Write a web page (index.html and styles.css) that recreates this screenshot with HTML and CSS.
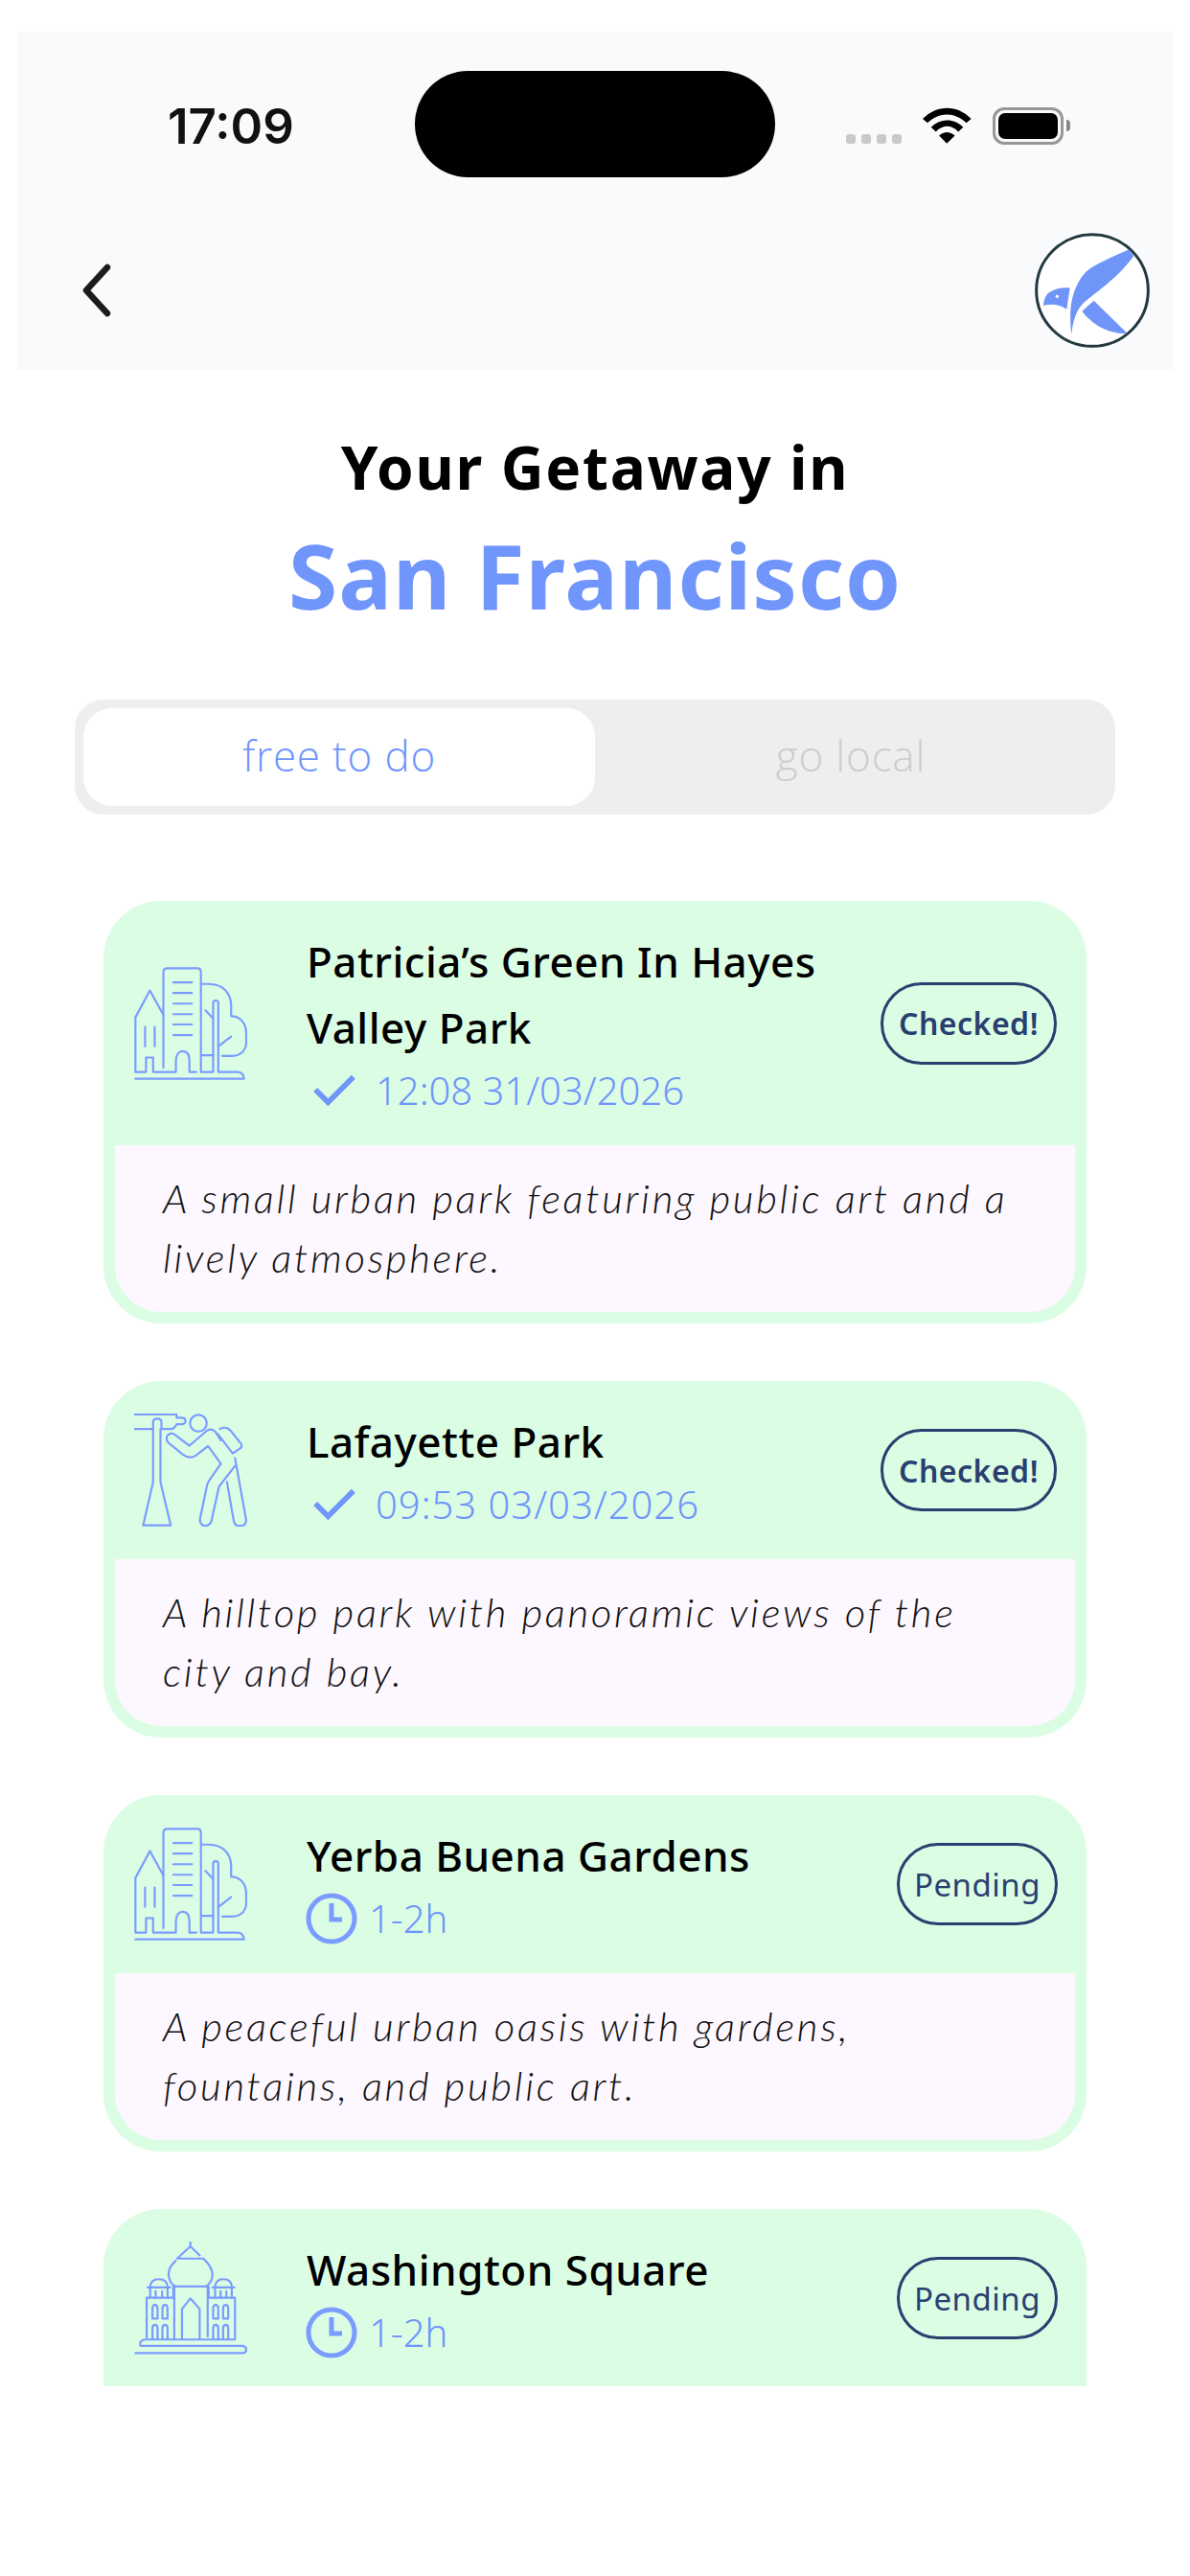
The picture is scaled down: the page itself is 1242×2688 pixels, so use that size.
FILE: index.html
```html
<!DOCTYPE html>
<html lang="en">
<head>
    <meta charset="UTF-8">
    <meta name="viewport" content="width=device-width, initial-scale=1.0">
    <title>Your Getaway</title>
    <link rel="stylesheet" href="styles.css">
</head>
<body>

    <!-- Top bar -->
    <header class="top-bar">
        <div class="status-bar">
            <span class="clock">17:09</span>
            <div class="island"></div>
            <div class="status-icons">
                <div class="signal"><i></i><i></i><i></i><i></i></div>
                <svg class="wifi" viewBox="340 65 152 112">
                    <path d="M340 100C385 55 447 55 491 100L476 113C440 78 391 78 355 113Z"/>
                    <path d="M366 126C396 97 436 97 466 126L451 140C428 118 404 118 381 140Z"/>
                    <path d="M391 152C406 138 425 138 440 152L415 177Z"/>
                </svg>
                <div class="battery"><span></span></div>
                <div class="battery-nub"></div>
            </div>
        </div>
        <div class="nav-bar">
            <svg class="back" viewBox="0 0 32 56">
                <path d="M27 4L5 28L27 52"/>
            </svg>
            <svg class="logo" viewBox="690 458 360 360">
                <circle cx="870" cy="638" r="175" class="logo-ring"/>
                <path class="logo-bird" d="M985 510C930 535 880 555 850 580C825 605 805 650 802 700C800 730 803 760 805 775C810 730 820 700 845 675C880 645 950 600 1000 530Z"/>
                <path class="logo-bird" d="M800 630C770 628 740 635 725 655C718 668 717 680 717 686C745 678 770 685 790 697Z"/>
                <path class="logo-bird" d="M875 670L838 703C870 745 920 775 980 773Z"/>
                <circle cx="760" cy="657" r="5" fill="#fff"/>
            </svg>
        </div>
    </header>

    <main>
        <div class="heading">
            <h2>Your Getaway in</h2>
            <h1>San Francisco</h1>
        </div>

        <div class="tabs">
            <div class="tab active">free to do</div>
            <div class="tab">go local</div>
        </div>

        <div class="card-list">

            <div class="card">
                <div class="card-head tall">
                    <svg class="place-icon" viewBox="118 243 352 352">
                        <path d="M122 591H460C460 580 452 570 442 570H380V355Q380 348 372 348Q364 348 364 355V570H326V260Q326 247 315 247H222Q209 247 209 260V556"/>
                        <path d="M122 570V400L167 316L209 392M152 430V490M182 430V490M122 570H155V525H177V570H248V535C248 515 258 505 269 505C282 505 290 515 290 535V570H312"/>
                        <path d="M240 291H298M240 324H298M240 357H298M240 390H298M240 422H298M240 455H298M326 518H364"/>
                        <path d="M326 296H350C395 296 420 325 420 365V396C450 396 467 420 467 450V480C467 505 445 520 425 520H392M340 378L364 403M380 490L420 460"/>
                    </svg>
                    <div class="card-text">
                        <div class="card-title">Patricia’s Green In Hayes Valley Park</div>
                        <div class="card-meta">
                            <svg class="check" viewBox="0 0 48 36"><path d="M3 17L17 31L45 3"/></svg>
                            <span>12:08 31/03/2026</span>
                        </div>
                    </div>
                    <div class="badge checked">Checked!</div>
                </div>
                <div class="card-desc">A small urban park featuring public art and a lively atmosphere.</div>
            </div>

            <div class="card">
                <div class="card-head">
                    <svg class="place-icon" viewBox="118 112 352 352">
                        <path d="M120 115H250V125H265Q278 125 278 135Q278 145 265 145H250Q245 160 230 160H203V140Q203 128 190 128Q177 128 177 140V325L146 460H232L200 325V160M177 160H120Z"/>
                        <circle cx="318" cy="142" r="26"/>
                        <path d="M345 165L290 212L245 178Q232 168 222 180Q215 192 225 203L270 240Q290 255 310 243L348 213L388 268L352 320Q345 330 343 345L323 440Q322 460 340 462Q358 460 360 440L382 340L432 275M345 165Q365 155 375 175L388 195"/>
                        <path d="M385 160Q405 150 418 165L450 205Q458 215 445 223L425 236L378 175M432 250L467 445Q465 462 447 462Q430 462 428 445L407 325"/>
                    </svg>
                    <div class="card-text">
                        <div class="card-title">Lafayette Park</div>
                        <div class="card-meta spaced">
                            <svg class="check" viewBox="0 0 48 36"><path d="M3 17L17 31L45 3"/></svg>
                            <span>09:53 03/03/2026</span>
                        </div>
                    </div>
                    <div class="badge checked">Checked!</div>
                </div>
                <div class="card-desc">A hilltop park with panoramic views of the city and bay.</div>
            </div>

            <div class="card">
                <div class="card-head">
                    <svg class="place-icon" viewBox="118 243 352 352">
                        <path d="M122 591H460C460 580 452 570 442 570H380V355Q380 348 372 348Q364 348 364 355V570H326V260Q326 247 315 247H222Q209 247 209 260V556"/>
                        <path d="M122 570V400L167 316L209 392M152 430V490M182 430V490M122 570H155V525H177V570H248V535C248 515 258 505 269 505C282 505 290 515 290 535V570H312"/>
                        <path d="M240 291H298M240 324H298M240 357H298M240 390H298M240 422H298M240 455H298M326 518H364"/>
                        <path d="M326 296H350C395 296 420 325 420 365V396C450 396 467 420 467 450V480C467 505 445 520 425 520H392M340 378L364 403M380 490L420 460"/>
                    </svg>
                    <div class="card-text">
                        <div class="card-title">Yerba Buena Gardens</div>
                        <div class="card-meta">
                            <svg class="clock-icon" viewBox="0 0 54 54"><circle cx="27" cy="27" r="24"/><path d="M27 11V28H38"/></svg>
                            <span>1-2h</span>
                        </div>
                    </div>
                    <div class="badge">Pending</div>
                </div>
                <div class="card-desc">A peaceful urban oasis with gardens, fountains, and public art.</div>
            </div>

            <!-- Last card runs off the bottom of the list -->
            <div class="card card-cut">
                <div class="card-head">
                    <svg class="place-icon" viewBox="118 155 352 352">
                        <path d="M122 502H455Q467 502 467 492Q467 480 452 480H140Q135 480 137 470Q140 460 155 460H432V330H350V295H240V330H157V460"/>
                        <path d="M293 157V172M252 208L293 170L322 198M252 208H335M247 215Q225 235 225 258Q228 285 247 295M342 295Q362 280 362 258Q360 232 335 210"/>
                        <path d="M243 295V460M347 295V450M267 458V365L293 332L322 365V458"/>
                        <path d="M160 298H230M168 298Q168 272 195 272Q222 272 222 298M168 298V330M222 298V330M185 310V330M205 310V330"/>
                        <path d="M362 298H430M370 298Q370 272 396 272Q422 272 422 298M370 298V330M422 298V330M387 310V330M405 310V330"/>
                        <path d="M175 395V365Q175 352 183 352Q191 352 191 365V395ZM206 395V365Q206 352 214 352Q222 352 222 365V395ZM175 458V425Q175 414 183 414Q191 414 191 425V458M206 458V425Q206 414 214 414Q222 414 222 425V458"/>
                        <path d="M364 395V365Q364 352 372 352Q380 352 380 365V395ZM395 395V365Q395 352 403 352Q411 352 411 365V395ZM364 458V425Q364 414 372 414Q380 414 380 425V458M395 458V425Q395 414 403 414Q411 414 411 425V458"/>
                    </svg>
                    <div class="card-text">
                        <div class="card-title">Washington Square</div>
                        <div class="card-meta">
                            <svg class="clock-icon" viewBox="0 0 54 54"><circle cx="27" cy="27" r="24"/><path d="M27 11V28H38"/></svg>
                            <span>1-2h</span>
                        </div>
                    </div>
                    <div class="badge">Pending</div>
                </div>
            </div>

        </div>
    </main>

</body>
</html>
```

FILE: styles.css
```css
body {
    margin: 0;
    background: #ffffff;
    font-family: 'Noto Sans', sans-serif;
    color: #000000;
}

/* Top bar */
.top-bar {
    margin: 33px 18px 0;
    height: 353px;
    background: #f9fafc;
}

.status-bar {
    position: relative;
    height: 208px;
    padding-top: 41px;
    box-sizing: border-box;
    display: flex;
    justify-content: center;
}

.clock {
    position: absolute;
    left: 157px;
    top: 68px;
    font-family: 'Inter', sans-serif;
    font-size: 51px;
    line-height: 62px;
    font-weight: 600;
    color: #111111;
}

.island {
    width: 376px;
    height: 111px;
    background: #000000;
    border-radius: 56px;
}

.status-icons {
    position: absolute;
    left: 865px;
    top: 78px;
    height: 40px;
    display: flex;
    align-items: center;
}

.signal {
    display: flex;
    gap: 6px;
    align-self: flex-end;
}

.signal i {
    width: 10px;
    height: 10px;
    background: #c9c9cb;
    border-radius: 3px;
    margin-bottom: 1px;
}

.wifi {
    width: 51px;
    height: 38px;
    margin-left: 22px;
    fill: #000000;
}

.battery {
    width: 74px;
    height: 39px;
    margin-left: 22px;
    box-sizing: border-box;
    border: 3px solid #979797;
    border-radius: 12px;
    padding: 3px;
}

.battery span {
    display: block;
    height: 100%;
    background: #000000;
    border-radius: 7px;
}

.battery-nub {
    width: 4px;
    height: 12px;
    margin-left: 3px;
    background: #888888;
    border-radius: 0 4px 4px 0;
}

.nav-bar {
    display: flex;
    justify-content: space-between;
    align-items: center;
    height: 124px;
    padding: 0 24px 0 67px;
}

.back {
    width: 32px;
    height: 56px;
    fill: none;
    stroke: #1c1c1e;
    stroke-width: 6.5;
    stroke-linecap: round;
    stroke-linejoin: round;
}

.logo {
    width: 120px;
    height: 120px;
}

.logo-ring {
    fill: #ffffff;
    stroke: #23393f;
    stroke-width: 9;
}

.logo-bird {
    fill: #7095f8;
}

/* Heading */
.heading {
    text-align: center;
    padding-top: 62px;
}

.heading h2 {
    margin: 0;
    font-size: 62px;
    line-height: 78px;
    font-weight: 700;
    letter-spacing: 1.7px;
}

.heading h1 {
    margin: 18px 0 0;
    font-size: 93px;
    line-height: 112px;
    font-weight: 700;
    color: #7095fb;
    letter-spacing: 1px;
}

/* Tabs */
.tabs {
    margin: 74px 78px 0;
    padding: 9px;
    height: 120px;
    box-sizing: border-box;
    background: #eeeeee;
    border-radius: 30px;
    display: flex;
}

.tab {
    flex: 1;
    display: flex;
    align-items: center;
    justify-content: center;
    border-radius: 30px;
    padding-bottom: 5px;
    font-size: 44px;
    font-weight: 300;
    font-family: 'Open Sans', sans-serif;
    letter-spacing: 0.8px;
    color: #cdcdcd;
}

.tab.active {
    background: #ffffff;
    color: #7095fb;
}

/* Cards */
.card-list {
    margin: 90px 108px 0;
    height: 1550px;
    overflow: hidden;
    display: flex;
    flex-direction: column;
    gap: 60px;
}

.card {
    flex-shrink: 0;
    background: #dbfde4;
    border-radius: 60px;
    padding: 0 12px 12px;
}

.card-cut {
    height: 300px;
}

.card-head {
    height: 186px;
    display: flex;
    align-items: center;
    padding: 0 19px 0 20px;
}

.card-head.tall {
    height: 255px;
}

.place-icon {
    width: 118px;
    height: 118px;
    flex-shrink: 0;
    fill: none;
    stroke: #7b9cff;
    stroke-width: 6.5;
    stroke-linecap: round;
    stroke-linejoin: round;
}

.card-text {
    flex: 1;
    min-width: 0;
    padding-left: 62px;
    padding-top: 2px;
}

.card-title {
    font-size: 44px;
    line-height: 69px;
    font-weight: 500;
    letter-spacing: 0.5px;
    padding-right: 40px;
}

.card-meta {
    display: flex;
    align-items: center;
    gap: 14px;
    font-size: 40px;
    line-height: 62px;
    font-weight: 300;
    color: #7095fb;
}

.card-meta.spaced {
    letter-spacing: 1px;
}

.check {
    width: 46px;
    height: 34px;
    margin: 0 6px;
    fill: none;
    stroke: #7095fb;
    stroke-width: 6;
}

.clock-icon {
    width: 54px;
    height: 54px;
    margin: 0 -2px 0 -1px;
    fill: none;
    stroke: #7b9cff;
    stroke-width: 5;
}

.badge {
    flex-shrink: 0;
    width: 168px;
    height: 86px;
    margin-right: -1px;
    box-sizing: border-box;
    display: flex;
    align-items: center;
    justify-content: center;
    border: 3px solid #2a3f6f;
    border-radius: 43px;
    color: #2a3f6f;
    font-size: 33px;
    letter-spacing: 0.5px;
}

.badge.checked {
    width: 184px;
    margin-right: 0;
    font-size: 32px;
    font-weight: 600;
}

.card-desc {
    background: #fdf7ff;
    border-radius: 0 0 48px 48px;
    padding: 24px 50px 26px;
    font-family: 'Lato', sans-serif;
    font-size: 42px;
    line-height: 62px;
    font-weight: 300;
    font-style: italic;
    letter-spacing: 2.7px;
    color: #111111;
}
```
